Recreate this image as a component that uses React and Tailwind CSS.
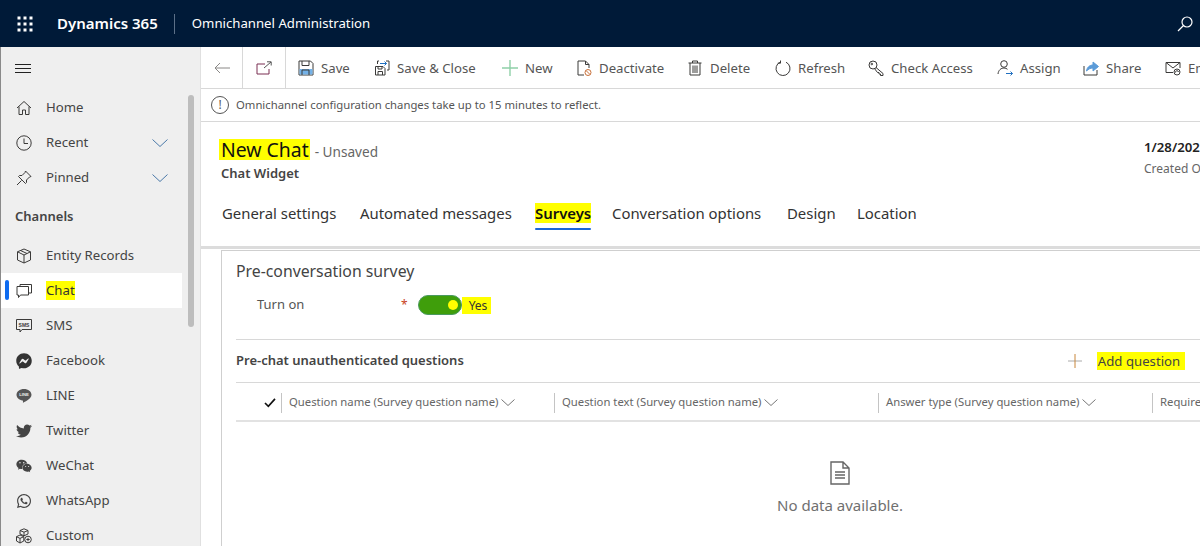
import { FaFacebookMessenger, FaTwitter, FaWeixin, FaWhatsapp } from 'react-icons/fa';

const Ico = ({ children, className = 'w-4 h-4', vb = '0 0 16 16' }) => (
    <svg viewBox={vb} className={`${className} shrink-0`} fill="none" stroke="#3b3a39" strokeWidth="1">
        {children}
    </svg>
);

const Waffle = () => (
    <svg viewBox="0 0 16 16" className="w-4 h-4" fill="#fff">
        {[1, 7, 13].map((y) => [1, 7, 13].map((x) => <rect key={`${x}-${y}`} x={x - 0.5} y={y - 0.5} width="3" height="3" />))}
    </svg>
);

const navIcons = {
    home: <Ico><path d="M1 8 8 1.5 15 8M3 6.5V14.5H6.5V10H9.5V14.5H13V6.5" /></Ico>,
    recent: <Ico><circle cx="8" cy="8" r="7.2" /><path d="M8 3.5V8.5H12" /></Ico>,
    pin: <Ico><path d="M9.5 1 15 6.5 13.5 7 10.5 10 10.5 12.5 9.5 13.5 2.5 6.5 3.5 5.5 6 5.5 9 2.5ZM5.5 10.5 1 15" /></Ico>,
    entity: <Ico><path d="M8 1 14.5 3.8V12L8 15 1.5 12V3.8ZM1.5 3.8 8 7 14.5 3.8M8 7V15M4.5 2.5 11 5.5" /></Ico>,
    chat: <Ico><path d="M4 3V1.5H15.5V10H13M1 3.5H12.5V12H4.5L2.5 14.5V12H1Z" /></Ico>,
    sms: (
        <svg viewBox="0 0 16 16" className="w-4 h-4 shrink-0">
            <path d="M.5 1.5H15.5V11.5H6L4 14V11.5H.5Z" fill="none" stroke="#3b3a39" />
            <text x="8" y="8.7" textAnchor="middle" fontSize="5" fontWeight="700" fill="#3b3a39" fontFamily="Liberation Sans, sans-serif">SMS</text>
        </svg>
    ),
    facebook: <FaFacebookMessenger className="w-4 h-4 shrink-0 text-[#333]" />,
    line: (
        <svg viewBox="0 0 16 16" className="w-4 h-4 shrink-0">
            <path d="M8 1C3.8 1 .5 3.6.5 6.8c0 2.9 2.6 5.2 6 5.7.4.1.6.3.5.8l-.1 1c0 .4.3.5.7.3 1.5-.9 7.9-4 7.9-7.8C15.5 3.6 12.2 1 8 1Z" fill="#555" />
            <text x="8" y="8.4" textAnchor="middle" fontSize="4.2" fontWeight="700" fill="#eee" fontFamily="Liberation Sans, sans-serif">LINE</text>
        </svg>
    ),
    twitter: <FaTwitter className="w-4 h-4 shrink-0 text-[#444]" />,
    wechat: <FaWeixin className="w-4 h-4 shrink-0 text-[#444]" />,
    whatsapp: <FaWhatsapp className="w-4 h-4 shrink-0 text-[#444]" />,
    custom: <Ico><path d="M8 .8 12 2.5V6L8 7.8 4 6V2.5ZM4 2.5 8 4.2 12 2.5M8 4.2V7.8M4 7 7.8 8.7V13L4 15 .5 13V8.7ZM.5 8.7 4 10.4 7.8 8.7M4 10.4V15" /><circle cx="12" cy="11.5" r="3.3" /><path d="M12 9.8V13.2M10.3 11.5H13.7" /></Ico>,
};

const NavRow = ({ icon, label, chevron, active, mark }) => (
    <div className={`h-[35px] flex items-center relative pl-[15px] ${active ? 'bg-white w-[181px]' : ''}`}>
        {active && <span className="absolute left-[4px] top-[7px] w-[4px] h-[20px] bg-[#0f6cf0] rounded-sm" />}
        {icon}
        <span className={`ml-[14px] text-[13.2px] ${mark ? 'bg-[#ffff00] text-[#333]' : 'text-[#444]'}`}>{label}</span>
        {chevron && (
            <svg viewBox="0 0 16 8" className="absolute left-[151px] top-[14px] w-4 h-2" fill="none" stroke="#4a78a8">
                <path d="M.5.5 8 7.5 15.5.5" />
            </svg>
        )}
    </div>
);

const commands = [
    { label: 'Save', cls: 'w-[76px]', icon: <Ico><path d="M1 1H12.5L15 3.5V15H1Z" fill="#fff" /><path d="M1.5 9H14.5V14.5H1.5Z" fill="#74b2e8" stroke="none" /><path d="M4 1V5.5H11V1M4 15V10H11V15" /></Ico> },
    { label: 'Save & Close', cls: 'w-[128px]', icon: <Ico><path d="M1.5 6.5H9L11 8.5V15H1.5ZM4 6.5V9H8V6.5M4 15V11.5H8.5V15M3.5 4V1H5M12 1H15V10H13" /><path d="M6 3.5H12.5M10.5 1.5 12.5 3.5 10.5 5.5" stroke="#1f6fc0" /></Ico> },
    { label: 'New', cls: 'w-[74px]', icon: <Ico><path d="M8 0V16M0 8H16" stroke="#8fd0a8" strokeWidth="1.4" /></Ico> },
    { label: 'Deactivate', cls: 'w-[111px]', icon: <Ico><path d="M8 15H2V1H9.5L13 4.5V8M9.5 1V4.5H13" /><circle cx="12" cy="12.5" r="3" stroke="#c8703a" /><path d="M10 10.5 14 14.5" stroke="#c8703a" /></Ico> },
    { label: 'Delete', cls: 'w-[88px]', icon: <Ico><path d="M1.5 3H14.5M5.5 3V1H10.5V3M3 3V15H13V3M6 5.5V13M8 5.5V13M10 5.5V13" /></Ico> },
    { label: 'Refresh', cls: 'w-[93px]', icon: <Ico><path d="M5.5 2A7 7 0 1 0 11 2.2M5.5 .5V3.2H2.8" /></Ico> },
    { label: 'Check Access', cls: 'w-[129px]', icon: <Ico><circle cx="5" cy="5" r="4" /><circle cx="3.8" cy="4" r=".8" /><path d="M8 7.5 15 13.5V15.5H12.5V14H11V12.5H9.5L6.8 9" /></Ico> },
    { label: 'Assign', cls: 'w-[86px]', icon: <Ico><circle cx="7" cy="4" r="3.3" /><path d="M1 14C1.5 10 4 8 7 8 8.5 8 9.5 8.5 10.5 9.3" /><path d="M9 13.5H15.5M13.5 11.5 15.5 13.5 13.5 15.5" stroke="#1f6fc0" /></Ico> },
    { label: 'Share', cls: 'w-[82px]', icon: <Ico><path d="M1 6V15H14V10" /><path d="M3.5 11C4 7 7 5 10 5V2L15.5 6.5 10 11V8C7.5 8 5.5 9 3.5 11Z" fill="#5b9bd8" stroke="#5b9bd8" /></Ico> },
    { label: 'Email a Link', cls: 'w-[100px]', icon: <Ico><path d="M8 12.5H1V2.5H15V8M1 2.5 8 8 15 2.5" /><circle cx="12" cy="12" r="3" /><path d="M10.5 12.5A1.5 1.5 0 1 1 13.5 12" /></Ico> },
];

const tabs = [
    { label: 'General settings', cls: 'w-[138px]' },
    { label: 'Automated messages', cls: 'w-[175px]' },
    { label: 'Surveys', cls: 'w-[77px]', active: true },
    { label: 'Conversation options', cls: 'w-[175px]' },
    { label: 'Design', cls: 'w-[70px]' },
    { label: 'Location', cls: 'w-[70px]' },
];

const columns = [
    { label: 'Question name (Survey question name)', cls: 'w-[273px]' },
    { label: 'Question text (Survey question name)', cls: 'w-[324px]' },
    { label: 'Answer type (Survey question name)', cls: 'w-[274px]' },
    { label: 'Required', cls: 'w-[100px]' },
];

export default function App() {
    return (
        <div className="w-[1200px] h-[546px] overflow-hidden flex flex-col bg-white font-['Noto_Sans',sans-serif] text-[#333]">
            {/* top bar */}
            <header className="h-[47px] shrink-0 bg-[#001a38] flex items-center text-white">
                <div className="w-[17px]" />
                <Waffle />
                <span className="ml-[24px] text-[15px] font-semibold">Dynamics 365</span>
                <span className="ml-[16px] w-px h-[20px] bg-[#5c7088]" />
                <span className="ml-[17px] text-[13.2px]">Omnichannel Administration</span>
                <svg viewBox="0 0 16 16" className="w-4 h-4 ml-auto mr-[7px]" fill="none" stroke="#fff" strokeWidth="1.2">
                    <circle cx="10" cy="6" r="5" />
                    <path d="M6.5 9.5 1 15" />
                </svg>
            </header>

            <div className="flex flex-1 min-h-0">
                {/* sidebar */}
                <aside className="w-[201px] shrink-0 bg-[#efefef] border-l border-[#8a8a8a] border-r-[#e0e0e0] border-r relative">
                    <span className="absolute left-[187px] top-[48px] w-[6px] h-[232px] rounded-full bg-[#bdbdbd]" />
                    <div className="h-[43px] flex items-center pl-[14px]">
                        <svg viewBox="0 0 16 10" className="w-4 h-[10px]" fill="none" stroke="#222">
                            <path d="M0 .5H16M0 4.5H16M0 8.5H16" />
                        </svg>
                    </div>
                    <NavRow icon={navIcons.home} label="Home" />
                    <NavRow icon={navIcons.recent} label="Recent" chevron />
                    <NavRow icon={navIcons.pin} label="Pinned" chevron />
                    <div className="h-[43px] flex items-center pl-[14px] text-[13px] font-semibold text-[#444]">Channels</div>
                    <NavRow icon={navIcons.entity} label="Entity Records" />
                    <NavRow icon={navIcons.chat} label="Chat" active mark />
                    <NavRow icon={navIcons.sms} label="SMS" />
                    <NavRow icon={navIcons.facebook} label="Facebook" />
                    <NavRow icon={navIcons.line} label="LINE" />
                    <NavRow icon={navIcons.twitter} label="Twitter" />
                    <NavRow icon={navIcons.wechat} label="WeChat" />
                    <NavRow icon={navIcons.whatsapp} label="WhatsApp" />
                    <NavRow icon={navIcons.custom} label="Custom" />
                </aside>

                <main className="flex-1 min-w-0 flex flex-col overflow-hidden">
                    {/* command bar */}
                    <div className="h-[42px] shrink-0 border-b border-[#d8d8d8] flex items-center whitespace-nowrap overflow-hidden">
                        <div className="w-[42px] h-full shrink-0 border-r border-[#d8d8d8] flex items-center justify-center">
                            <svg viewBox="0 0 16 12" className="w-4 h-3" fill="none" stroke="#8a8886">
                                <path d="M16 6H1M6 1 1 6 6 11" />
                            </svg>
                        </div>
                        <div className="w-[43px] h-full shrink-0 border-r border-[#d8d8d8] flex items-center justify-center">
                            <svg viewBox="0 0 16 14" className="w-4 h-[14px]" fill="none" stroke="#7a2f52">
                                <path d="M9 3H1V13H13V8" />
                                <path d="M8 7 15 1M11 .8H15.2V4.5" stroke="#555" />
                            </svg>
                        </div>
                        <div className="flex items-center pl-[12px]">
                            {commands.map((c) => (
                                <div key={c.label} className={`flex items-center gap-[7px] shrink-0 ${c.cls}`}>
                                    {c.icon}
                                    <span className="text-[13.2px] leading-[18px] pt-px text-[#555]">{c.label}</span>
                                </div>
                            ))}
                        </div>
                    </div>

                    {/* notification */}
                    <div className="h-[33px] shrink-0 border-b border-[#d8d8d8] flex items-center pl-[10px]">
                        <span className="w-[18px] h-[18px] rounded-full border border-[#555] flex items-center justify-center text-[12px] leading-none text-[#555]">!</span>
                        <span className="ml-[7px] text-[11.3px] text-[#555]">Omnichannel configuration changes take up to 15 minutes to reflect.</span>
                    </div>

                    {/* record header */}
                    <div className="h-[127px] shrink-0 border-b-[3px] border-[#dcdcdc] px-[20px] pt-[14px] flex flex-col">
                        <div className="flex whitespace-nowrap">
                            <div>
                                <div className="flex items-baseline h-[26px] pt-[3px]">
                                    <span className="bg-[#ffff00] text-[19.4px] leading-[21px] text-[#111] pl-[2px] pr-px -ml-[2px]">New Chat</span>
                                    <span className="ml-[5px] text-[13.6px] text-[#666]">- Unsaved</span>
                                </div>
                                <div className="mt-[2px] text-[13px] font-semibold text-[#444] leading-[18px]">Chat Widget</div>
                            </div>
                            <div className="ml-auto -mr-[20px] w-[56px] overflow-hidden pt-[2px]">
                                <div className="text-[13.2px] font-semibold text-[#222] leading-[18px]">1/28/2021</div>
                                <div className="mt-[5px] text-[12px] text-[#666] leading-[16px]">Created On</div>
                            </div>
                        </div>
                        <nav className="flex mt-[19px] pl-px whitespace-nowrap">
                            {tabs.map((t) => (
                                <div key={t.label} className={`shrink-0 ${t.cls}`}>
                                    <span className={`inline-block text-[14.9px] leading-[20px] ${t.active ? 'font-semibold text-[#111] bg-[#ffff00]' : 'text-[#333]'}`}>{t.label}</span>
                                    {t.active && <div className="h-[2px] w-[56px] mt-[3px] bg-[#1a66d8] rounded-sm" />}
                                </div>
                            ))}
                        </nav>
                    </div>

                    {/* survey section */}
                    <div className="flex-1 min-h-0 pl-[20px]">
                        <section className="h-full border-l border-t border-[#cfcfcf] mt-[1px] pl-[14px] whitespace-nowrap">
                            <h2 className="pt-[8px] text-[15.8px] leading-[24px] text-[#444]">Pre-conversation survey</h2>
                            <div className="h-[56px] pb-[12px] flex items-center pl-[21px]">
                                <span className="w-[144px] text-[13px] text-[#555]">Turn on</span>
                                <span className="text-[#c8401a] text-[12px]">*</span>
                                <span className="ml-[10px] w-[44px] h-[20px] rounded-full bg-[#3f9e0b] border border-[#4a9a5e] flex items-center justify-end pr-[3px]">
                                    <span className="w-[10px] h-[10px] rounded-full bg-[#ffff00]" />
                                </span>
                                <span className="bg-[#ffff00] text-[12px] leading-[17px] pl-[7px] pr-[4px] text-[#333]">Yes</span>
                            </div>
                            <div className="h-[44px] border-y border-[#d8d8d8] flex items-center">
                                <span className="text-[13px] font-semibold text-[#444]">Pre-chat unauthenticated questions</span>
                                <svg viewBox="0 0 14 14" className="w-[14px] h-[14px] ml-[604px]" fill="none">
                                    <path d="M0 7H14" stroke="#aaa" />
                                    <path d="M7 0V14" stroke="#c8863a" />
                                </svg>
                                <span className="ml-[15px] bg-[#ffff00] text-[13.2px] leading-[18px] px-px pr-[5px] text-[#444]">Add question</span>
                            </div>
                            <div className="h-[39px] pt-[2px] border-b-2 border-[#e2e2e2] flex items-center">
                                <svg viewBox="0 0 14 12" className="w-3 h-[10px] ml-[28px] mr-[5px] shrink-0" fill="none" stroke="#111" strokeWidth="2">
                                    <path d="M1 6 5 10 13 1" />
                                </svg>
                                {columns.map((c) => (
                                    <div key={c.label} className={`${c.cls} shrink-0 h-[20px] border-l border-[#c4c4c4] pl-[7px] flex items-center gap-[3px] text-[11.3px] text-[#666]`}>
                                        {c.label}
                                        {c.label !== 'Required' && (
                                            <svg viewBox="0 0 14 7" className="w-[14px] h-[7px] shrink-0" fill="none" stroke="#777">
                                                <path d="M.5.5 7 6.5 13.5.5" />
                                            </svg>
                                        )}
                                    </div>
                                ))}
                            </div>
                            <div className="flex flex-col items-center w-[1208px] pt-[39px]">
                                <svg viewBox="0 0 20 24" className="w-[20px] h-[24px]" fill="none" stroke="#666" strokeWidth="1.4">
                                    <path d="M1 1H13L19 7V23H1ZM13 1V7H19" />
                                    <path d="M5 11H15M5 14H15M5 17H15" />
                                </svg>
                                <p className="mt-[9px] text-[15px] text-[#707070]">No data available.</p>
                            </div>
                        </section>
                    </div>
                </main>
            </div>
        </div>
    );
}
